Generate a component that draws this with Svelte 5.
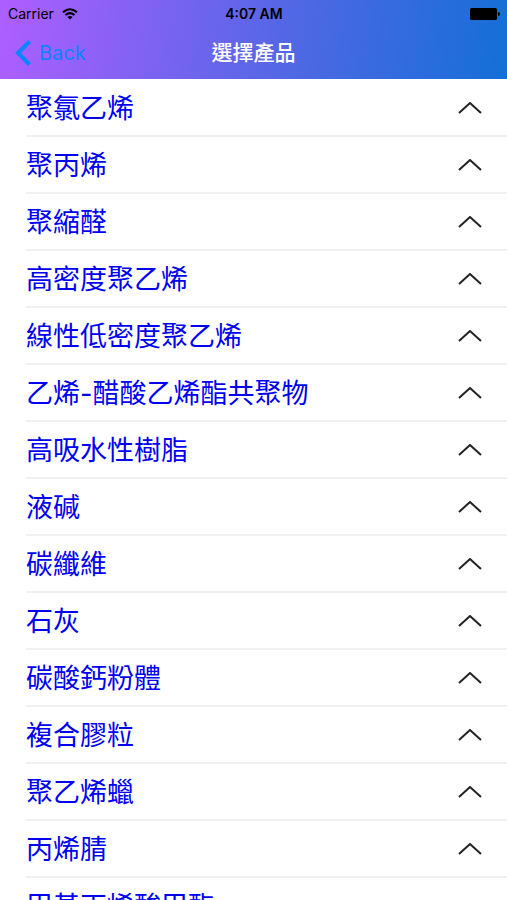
<script>
  let products = $state([
    {name: "聚氯乙烯", open: false},
    {name: "聚丙烯", open: false},
    {name: "聚縮醛", open: false},
    {name: "高密度聚乙烯", open: false},
    {name: "線性低密度聚乙烯", open: false},
    {name: "乙烯-醋酸乙烯酯共聚物", open: false},
    {name: "高吸水性樹脂", open: false},
    {name: "液碱", open: false},
    {name: "碳纖維", open: false},
    {name: "石灰", open: false},
    {name: "碳酸鈣粉體", open: false},
    {name: "複合膠粒", open: false},
    {name: "聚乙烯蠟", open: false},
    {name: "丙烯腈", open: false},
    {name: "甲基丙烯酸甲酯", open: false}
  ]);

  function toggle(product) {
    product.open = !product.open;
  }
</script>


<div class="screen">
  <header>
    <div class="status">
      <div class="carrier">
        <span>Carrier</span>
        <svg class="wifi" viewBox="0 0 16 12" aria-hidden="true">
          <path d="M1 4.3 Q8 -1.9 15 4.3" />
          <path d="M3.5 7 Q8 3.2 12.5 7" />
          <path class="dot" d="M8 11.6 L5.4 8.9 Q8 6.9 10.6 8.9 Z" />
        </svg>
      </div>
      <span class="time">4:07 AM</span>
      <svg class="battery" viewBox="0 0 30 12" aria-hidden="true">
        <rect x="0" y="0" width="27" height="12" rx="1.5" />
        <path d="M28 4 Q30 4 30 6 Q30 8 28 8 Z" />
      </svg>
    </div>
    <nav>
      <button class="back">
        <svg viewBox="0 0 16 26" aria-hidden="true">
          <path d="M14.5 1.5 L3 13 L14.5 24.5" />
        </svg>
        <span>Back</span>
      </button>
      <h1>選擇產品</h1>
    </nav>
  </header>

  <ul class="list">
    {#each products as product}
      <li>
        <button class="row" aria-expanded={product.open} onclick={() => toggle(product)}>
          <span>{product.name}</span>
          <svg class="arrow" class:open={product.open} viewBox="0 0 24 12" aria-hidden="true">
            <path d="M1 11 L12 1 L23 11" />
          </svg>
        </button>
      </li>
    {/each}
  </ul>
</div>


<style>
  :global(body) {
    margin: 0;
    background: #fff;
  }

  .screen {
    display: flex;
    flex-direction: column;
    height: 100vh;
    font-family: Inter, "Noto Sans CJK TC", sans-serif;
  }

  header {
    flex: none;
    background: linear-gradient(97deg, #ae5eff 0%, #4a68e2 62%, #146fd7 100%);
  }

  .status {
    display: grid;
    grid-template-columns: 1fr auto 1fr;
    align-items: center;
    height: 27px;
    padding: 0 7px 0 8px;
    font-size: 14px;
    color: #000;
  }

  .carrier {
    display: flex;
    align-items: center;
    gap: 8px;
  }

  .wifi {
    width: 16px;
    height: 12px;
    fill: none;
    stroke: #000;
    stroke-width: 2;
  }

  .wifi .dot {
    fill: #000;
    stroke: none;
  }

  .time {
    font-weight: 600;
  }

  .battery {
    justify-self: end;
    width: 30px;
    height: 12px;
  }

  nav {
    display: grid;
    grid-template-columns: 1fr auto 1fr;
    align-items: center;
    height: 52px;
    padding: 0 15px;
  }

  .back {
    display: flex;
    align-items: center;
    justify-self: start;
    gap: 8px;
    padding: 0;
    border: none;
    background: transparent;
    font-family: inherit;
    font-size: 20px;
    color: #0a84ff;
    cursor: pointer;
  }

  .back svg {
    width: 16px;
    height: 26px;
    fill: none;
    stroke: #0a84ff;
    stroke-width: 4;
  }

  h1 {
    margin: 0;
    font-size: 21px;
    font-weight: 500;
    line-height: 30px;
    color: #fff;
  }

  .list {
    flex: 1 1 auto;
    min-height: 0;
    margin: 0;
    padding: 1px 0 0 26px;
    list-style: none;
    overflow-y: auto;
    scrollbar-width: none;
  }

  .row {
    display: flex;
    align-items: center;
    justify-content: space-between;
    box-sizing: border-box;
    width: 100%;
    height: 57px;
    padding: 0 25px 0 0;
    border: none;
    border-bottom: 2px solid #f1f1f1;
    background: transparent;
    font-family: Inter, "Noto Sans CJK TC", sans-serif;
    font-size: 27px;
    line-height: 40px;
    text-align: left;
    color: #0000f0;
    cursor: pointer;
  }

  .row span {
    padding-top: 2px;
  }

  .arrow {
    width: 24px;
    height: 12px;
    fill: none;
    stroke: #222;
    stroke-width: 2;
  }

  .arrow.open {
    transform: rotate(180deg);
  }
</style>
